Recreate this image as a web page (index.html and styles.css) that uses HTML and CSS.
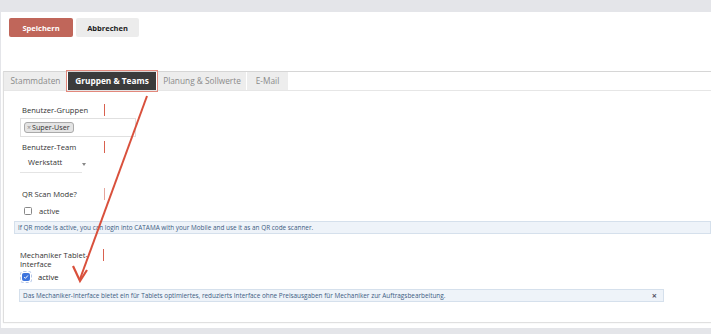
FILE: index.html
```html
<!DOCTYPE html>
<html lang="de">
<head>
<meta charset="utf-8">
<link rel="stylesheet" href="styles.css">
</head>
<body>
<div class="page">
  <div class="actions">
    <button class="btn btn-save">Speichern</button>
    <button class="btn btn-cancel">Abbrechen</button>
  </div>
  <div class="card">
    <div class="tabs">
      <div class="tab">Stammdaten</div>
      <div class="tab active">Gruppen &amp; Teams</div>
      <div class="tab">Planung &amp; Sollwerte</div>
      <div class="tab">E-Mail</div>
    </div>
    <div class="content">
      <div class="group g-groups">
        <div class="label-row"><span class="label">Benutzer-Gruppen</span><span class="mark"></span></div>
        <div class="multi"><span class="tag"><span class="tag-x">×</span>Super-User</span></div>
      </div>
      <div class="group g-team">
        <div class="label-row"><span class="label">Benutzer-Team</span><span class="mark"></span></div>
        <div class="select"><span>Werkstatt</span><span class="caret"></span></div>
      </div>
      <div class="group g-qr">
        <div class="label-row"><span class="label">QR Scan Mode?</span><span class="mark light"></span></div>
        <label class="check"><span class="box"></span><span>active</span></label>
      </div>
      <div class="info info-qr">If QR mode is active, you can login into CATAMA with your Mobile and use it as an QR code scanner.</div>
      <div class="group g-mech">
        <div class="label-row"><span class="label two">Mechaniker Tablet-<br>Interface</span><span class="mark"></span></div>
        <label class="check checked"><span class="box"><svg width="8" height="8" viewBox="0 0 8 8"><path d="M1.5 4.2 L3.2 5.8 L6.5 2" fill="none" stroke="#fff" stroke-width="1.3"/></svg></span><span>active</span></label>
      </div>
      <div class="info info-mech"><span>Das Mechaniker-Interface bietet ein für Tablets optimiertes, reduzierts Interface ohne Preisausgaben für Mechaniker zur Auftragsbearbeitung.</span><span class="close">×</span></div>
    </div>
  </div>
</div>
<svg class="arrow" width="711" height="334" viewBox="0 0 711 334">
  <line x1="147" y1="96" x2="80" y2="279" stroke="#d9503c" stroke-width="2"/>
  <path d="M73 266 L80 281 L87 270" fill="none" stroke="#d9503c" stroke-width="2.2" stroke-linejoin="miter"/>
</svg>
</body>
</html>
```
FILE: styles.css
```css
html, body { margin: 0; padding: 0; }
body {
  background: #e4e5e9;
  font-family: "Open Sans", "DejaVu Sans", sans-serif;
  width: 711px;
  height: 334px;
  overflow: hidden;
  position: relative;
}
.page {
  margin: 12px 0 0 1px;
  background: #fff;
  height: 316px;
  padding: 6px 0 0 2px;
  box-sizing: border-box;
}
.actions { display: flex; gap: 3px; padding-left: 6px; }
.btn {
  height: 19px;
  border: none;
  border-radius: 2px;
  font-family: "Open Sans", sans-serif;
  font-weight: 700;
  font-size: 7.5px;
  padding: 0;
  width: 64px;
}
.btn-save { background: #c0665a; color: #fff; }
.btn-cancel { background: #ececec; color: #222; width: 63px; }
.card {
  margin-top: 34px;
  border-top: 1px solid #d6d6d6;
  border-left: 1px solid #dedede;
  height: 251px;
  box-shadow: 0 1px 1px rgba(0,0,0,0.12);
  box-sizing: border-box;
}
.tabs {
  display: flex;
  gap: 1px;
  height: 19px;
  border-bottom: 1px solid #e6e6e6;
  box-sizing: border-box;
}
.tab {
  background: #ededed;
  color: #8a8a8a;
  font-size: 8.3px;
  line-height: 18px;
  text-align: center;
}
.tab:nth-child(1) { width: 63px; }
.tab:nth-child(3) { width: 88px; margin-left: 1px; }
.tab:nth-child(4) { width: 41px; }
.tab.active {
  width: 88px;
  background: #3b3b3b;
  color: #fff;
  font-weight: 700;
  outline: 1px solid #e2887c;
  outline-offset: 1px;
  height: 18px;
}
.content { padding: 12px 0 0 16px; position: relative; }
.label-row { display: flex; align-items: center; height: 12px; }
.label { width: 82px; font-size: 7.6px; color: #333; padding-left: 2px; }
.mark { width: 1px; height: 12px; background: #d9614f; }
.mark.light { background: #e6a59c; }
.g-groups { margin-top: 1px; }
.multi {
  margin-top: 2px;
  width: 116px;
  height: 19px;
  border: 1px solid #e0e0e0;
  box-sizing: border-box;
  padding: 0 0 0 3px;
  display: flex;
  align-items: center;
}
.tag {
  display: inline-flex;
  align-items: center;
  height: 11px;
  background: #e4e4e4;
  border: 1px solid #aaa;
  border-radius: 3px;
  font-size: 7.2px;
  color: #333;
  padding: 0 3px 0 2px;
  box-sizing: border-box;
  line-height: 9px;
}
.tag-x { color: #888; font-size: 7px; margin-right: 1px; }
.g-team { margin-top: 4px; }
.select {
  margin-top: 4px;
  width: 62px;
  height: 16px;
  border-bottom: 1px solid #e4e4e4;
  font-size: 7.6px;
  color: #333;
  padding-left: 8px;
  box-sizing: border-box;
  position: relative;
}
.caret {
  position: absolute;
  left: 62px;
  top: 6px;
  border-left: 2.5px solid transparent;
  border-right: 2.5px solid transparent;
  border-top: 3px solid #888;
}
.g-qr { margin-top: 15px; }
.check { display: flex; align-items: center; gap: 7px; font-size: 7.6px; color: #333; margin-top: 6px; padding-left: 4px; }
.box {
  width: 8px; height: 8px;
  border: 1px solid #888;
  border-radius: 1.5px;
  box-sizing: border-box;
  background: #fff;
  display: flex; align-items: center; justify-content: center;
}
.info {
  background: #eef3f9;
  border: 1px solid #d5e0ec;
  color: #3c5b82;
  font-size: 6.4px;
  height: 13px;
  line-height: 11px;
  box-sizing: border-box;
  padding-left: 3px;
}
.info-qr { margin: 5px 0 0 -6px; }
.g-mech { margin-top: 17px; }
.g-mech .label-row { height: 17px; align-items: flex-start; }
.g-mech .label { padding-left: 0; width: 83px; line-height: 8.5px; }
.g-mech .mark { margin-top: -2px; }
.g-mech .check { padding-left: 2px; margin-top: 4px; gap: 8px; }
.checked .box {
  background: #3d74dd;
  border-color: #3d74dd;
  outline: 1px dashed #b7c8e8;
  outline-offset: 1px;
}
.checked span:last-child { color: #222; }
.info-mech {
  margin: 7px 0 0 -1px;
  width: 645px;
  display: flex;
  justify-content: space-between;
  padding-right: 6px;
}
.close { color: #556; font-size: 9px; font-weight: 700; line-height: 11px; }
.arrow { position: absolute; left: 0; top: 0; pointer-events: none; }
```
